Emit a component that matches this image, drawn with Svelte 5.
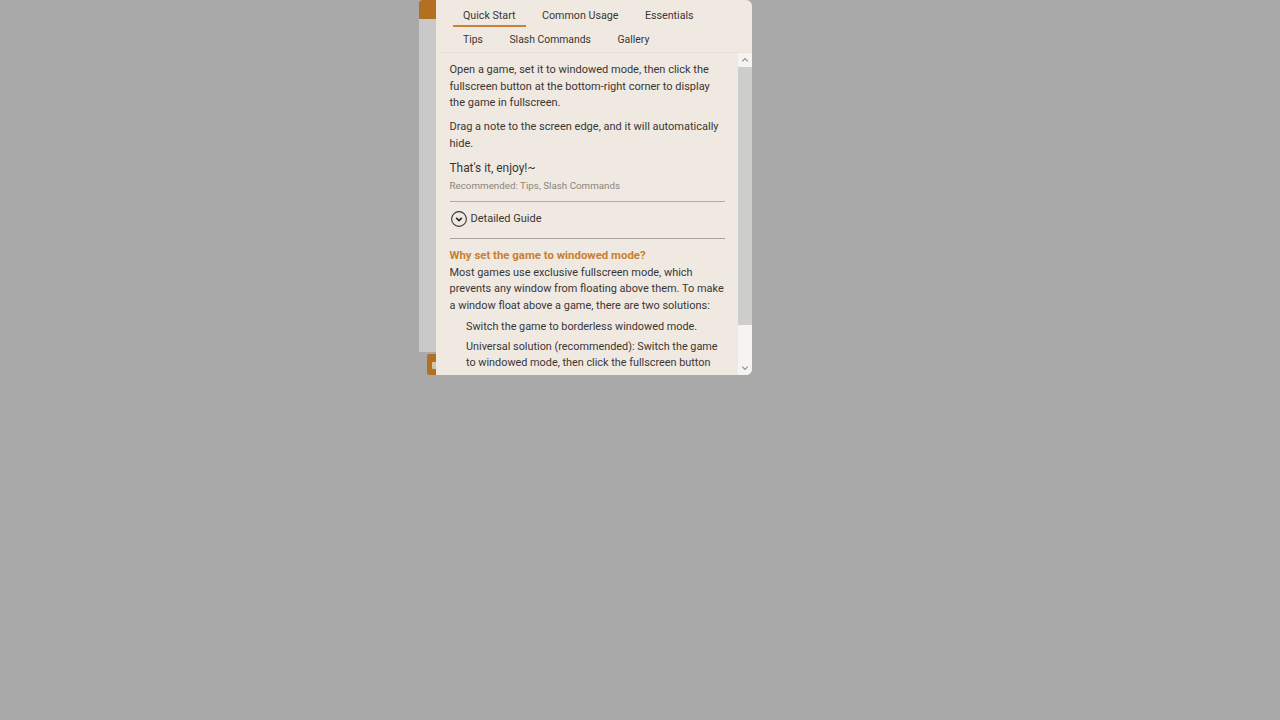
<script>
	const tabRows = [
		['Quick Start', 'Common Usage', 'Essentials'],
		['Tips', 'Slash Commands', 'Gallery']
	];
	let active = $state('Quick Start');
</script>

<div class="stage">
	<!-- Edge of the window sitting behind the help panel -->
	<div class="behind">
		<div class="behind-head"></div>
		<div class="behind-body"></div>
		<div class="behind-action"><span class="behind-glyph"></span></div>
	</div>

	<section class="panel">
		<nav class="tabs">
			{#each tabRows as row}
				<div class="tab-row">
					{#each row as tab}
						<button class="tab" class:active={tab === active} onclick={() => (active = tab)}>{tab}</button>
					{/each}
				</div>
			{/each}
		</nav>

		<div class="main">
			<div class="content">
				<p>Open a game, set it to windowed mode, then click the fullscreen button at the bottom-right corner to display the game in fullscreen.</p>
				<p class="second">Drag a note to the screen edge, and it will automatically hide.</p>
				<p class="enjoy">That's it, enjoy!~</p>
				<p class="hint">Recommended: Tips, Slash Commands</p>

				<div class="guide">
					<span class="guide-icon">
						<svg viewBox="0 0 16 16" width="16" height="16" fill="none">
							<circle cx="8" cy="8" r="7.4" stroke="#3a3735" stroke-width="1.1" />
							<path d="M5.2 6.9 8 9.6l2.8-2.7" stroke="#2a2725" stroke-width="1.6" />
						</svg>
					</span>
					Detailed Guide
				</div>

				<h4>Why set the game to windowed mode?</h4>
				<p class="lead">Most games use exclusive fullscreen mode, which prevents any window from floating above them. To make a window float above a game, there are two solutions:</p>
				<ul>
					<li>Switch the game to borderless windowed mode.</li>
					<li>Universal solution (recommended): Switch the game to windowed mode, then click the fullscreen button</li>
				</ul>
			</div>

			<div class="scrollbar">
				<span class="arrow">
					<svg viewBox="0 0 14 14" width="14" height="14" fill="none"><path d="M4.2 8.3 7 5.6l2.8 2.7" stroke="#8d8d8d" stroke-width="1.1" /></svg>
				</span>
				<div class="thumb"></div>
				<div class="track"></div>
				<span class="arrow">
					<svg viewBox="0 0 14 14" width="14" height="14" fill="none"><path d="M4.2 5.7 7 8.4l2.8-2.7" stroke="#8d8d8d" stroke-width="1.1" /></svg>
				</span>
			</div>
		</div>
	</section>
</div>

<style>
	:global(body) {
		margin: 0;
		background: #a9a9a9;
	}

	.stage {
		display: flex;
		align-items: flex-start;
		height: 720px;
		padding-left: 419px;
		font-family: Roboto, 'Noto Sans', sans-serif;
		color: #393634;
		overflow: hidden;
	}

	/* ── Window behind the panel ── */

	.behind {
		display: flex;
		flex-direction: column;
		width: 17px;
		height: 375px;
		flex-shrink: 0;
	}

	.behind-head {
		height: 19px;
		background: #b36f22;
		border-top-left-radius: 4px;
	}

	.behind-body {
		height: 333px;
		background: #c9c9c9;
	}

	.behind-action {
		width: 9px;
		height: 21px;
		margin: 2px 0 0 8px;
		background: #b36f22;
		border-radius: 2px 0 0 2px;
		overflow: hidden;
	}

	.behind-glyph {
		display: block;
		width: 6px;
		height: 7px;
		margin: 8px 0 0 5px;
		background: #d8c4a8;
		border-radius: 1px;
	}

	/* ── Panel ── */

	.panel {
		display: flex;
		flex-direction: column;
		width: 316px;
		height: 375px;
		background: #f0e9e2;
		border-radius: 0 6px 6px 0;
		overflow: hidden;
	}

	.tabs {
		display: flex;
		flex-direction: column;
		height: 53px;
		padding: 3px 0 0 17px;
		box-sizing: border-box;
		border-bottom: 1px solid #e8e2db;
		flex-shrink: 0;
	}

	.tab-row {
		display: flex;
		gap: 6.5px;
		height: 24px;
	}

	.tab {
		height: 24px;
		padding: 3px 10px 0;
		border: 0;
		border-bottom: 2px solid transparent;
		border-radius: 0;
		background: none;
		color: inherit;
		font: inherit;
		font-size: 10.7px;
		cursor: pointer;
	}

	.tab-row + .tab-row .tab {
		font-size: 10.4px;
	}

	.tab.active {
		border-bottom-color: #c9803a;
	}

	.main {
		display: flex;
		flex: 1;
		min-height: 0;
	}

	.content {
		flex: 1;
		min-width: 0;
		padding: 9px 13px 0 13.5px;
		font-size: 11px;
		line-height: 16.7px;
		overflow: hidden;
	}

	p {
		margin: 0;
	}

	.second {
		margin-top: 7px;
	}

	.enjoy {
		margin-top: 7px;
		font-size: 11.9px;
	}

	.hint {
		margin-top: 2px;
		padding-bottom: 6px;
		border-bottom: 1px solid #b3aba3;
		font-size: 9.8px;
		color: #8c857d;
	}

	.guide {
		display: flex;
		align-items: center;
		gap: 3.5px;
		height: 37.5px;
		padding-bottom: 2px;
		box-sizing: border-box;
		border-bottom: 1px solid #a9a29b;
	}

	.guide-icon {
		display: flex;
		margin-left: 1.5px;
	}

	h4 {
		margin: 8px 0 0;
		font-size: 11.4px;
		font-weight: 700;
		color: #c9802f;
	}

	/* This paragraph runs a hair wider than the text column */
	.lead {
		margin-top: 0.5px;
		margin-right: -3px;
		font-size: 10.95px;
	}

	ul {
		margin: 4px 0 0;
		padding: 0 3px 0 16.5px;
		list-style: none;
		font-size: 10.85px;
	}

	li + li {
		margin-top: 3.3px;
	}

	/* ── Scrollbar ── */

	.scrollbar {
		display: flex;
		flex-direction: column;
		width: 14px;
		flex-shrink: 0;
		background: #f6f4f2;
	}

	.arrow {
		display: block;
		height: 14px;
		flex-shrink: 0;
	}

	.arrow svg {
		display: block;
	}

	.thumb {
		height: 258px;
		background: #cdcdcb;
	}

	.track {
		flex: 1;
	}
</style>
